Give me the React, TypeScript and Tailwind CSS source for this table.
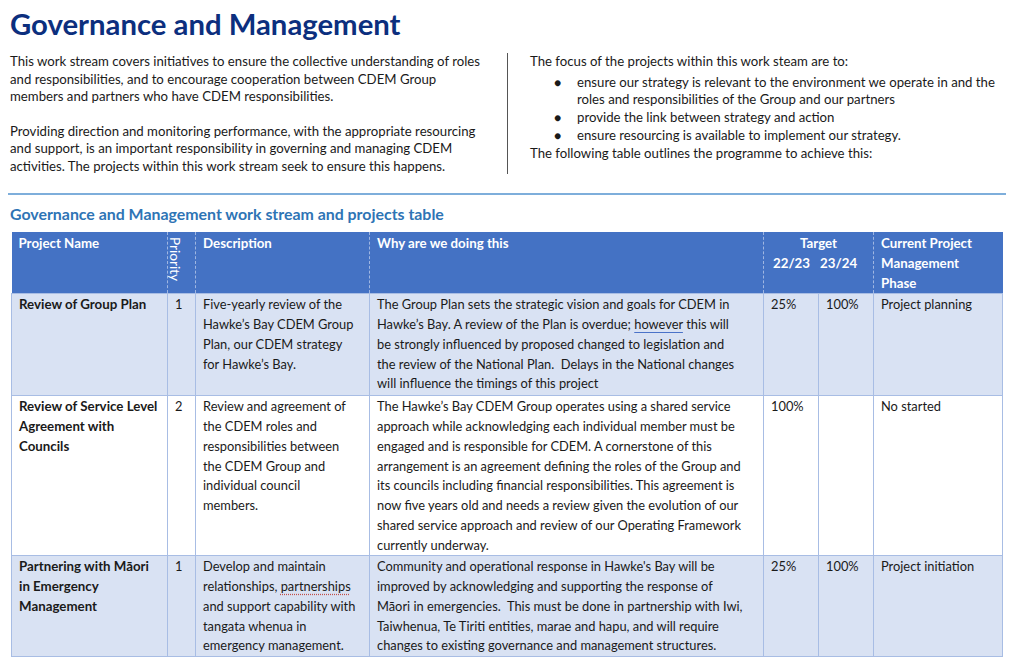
import React from "react";

const Lines = ({ lines, bold = false }: { lines: React.ReactNode[]; bold?: boolean }) => (
  <div className={bold ? "font-bold" : ""}>
    {lines.map((l, i) => (
      <div key={i} className="whitespace-pre">
        {l}
      </div>
    ))}
  </div>
);

type Row = {
  name: string[];
  priority: string;
  desc: React.ReactNode[];
  why: React.ReactNode[];
  t1: string;
  t2: string;
  phase: string;
  shaded: boolean;
  h: string;
};

const rows: Row[] = [
  {
    name: ["Review of Group Plan"],
    priority: "1",
    desc: ["Five-yearly review of the", "Hawke’s Bay CDEM Group", "Plan, our CDEM strategy", "for Hawke’s Bay."],
    why: [
      "The Group Plan sets the strategic vision and goals for CDEM in",
      <>
        Hawke’s Bay. A review of the Plan is overdue;{" "}
        <span className="underline decoration-[#4a72c8] underline-offset-[3px]">however</span> this will
      </>,
      "be strongly influenced by proposed changed to legislation and",
      "the review of the National Plan.  Delays in the National changes",
      "will influence the timings of this project",
    ],
    t1: "25%",
    t2: "100%",
    phase: "Project planning",
    shaded: true,
    h: "h-[102px]",
  },
  {
    name: ["Review of Service Level", "Agreement with", "Councils"],
    priority: "2",
    desc: [
      "Review and agreement of",
      "the CDEM roles and",
      "responsibilities between",
      "the CDEM Group and",
      "individual council",
      "members.",
    ],
    why: [
      "The Hawke’s Bay CDEM Group operates using a shared service",
      "approach while acknowledging each individual member must be",
      "engaged and is responsible for CDEM. A cornerstone of this",
      "arrangement is an agreement defining the roles of the Group and",
      "its councils including financial responsibilities. This agreement is",
      "now five years old and needs a review given the evolution of our",
      "shared service approach and review of our Operating Framework",
      "currently underway.",
    ],
    t1: "100%",
    t2: "",
    phase: "No started",
    shaded: false,
    h: "h-[160px]",
  },
  {
    name: ["Partnering with Māori", "in Emergency", "Management"],
    priority: "1",
    desc: [
      "Develop and maintain",
      <>
        relationships,{" "}
        <span className="underline decoration-dotted decoration-[#c0504d] underline-offset-[3px]">partnerships</span>
      </>,
      "and support capability with",
      "tangata whenua in",
      "emergency management.",
    ],
    why: [
      "Community and operational response in Hawke's Bay will be",
      "improved by acknowledging and supporting the response of",
      "Māori in emergencies.  This must be done in partnership with Iwi,",
      "Taiwhenua, Te Tiriti entities, marae and hapu, and will require",
      "changes to existing governance and management structures.",
    ],
    t1: "25%",
    t2: "100%",
    phase: "Project initiation",
    shaded: true,
    h: "h-[100px]",
  },
];

export default function App() {
  const td = "align-top pl-[7px] pr-[2px] pt-[1px] border border-[#a8bde4]";
  const th = "align-top pl-[7px] pt-[2px] border-r border-dashed border-[#9fb6e2] text-left font-bold text-[13.3px]";
  return (
    <div className="w-[1009px] h-[665px] overflow-hidden bg-white font-['Lato',sans-serif] text-[#1a1a1a]">
      <h1 className="pl-[10px] pt-[6px] text-[29.3px] leading-[36px] font-bold text-[#0c2f7e]">
        Governance and Management
      </h1>

      <div className="flex mt-[11px] text-[13.2px] leading-[17.5px]">
        <div className="w-[507px] pl-[10px]">
          <p className="whitespace-pre">
            {"This work stream covers initiatives to ensure the collective understanding of roles\nand responsibilities, and to encourage cooperation between CDEM Group\nmembers and partners who have CDEM responsibilities."}
          </p>
          <p className="whitespace-pre mt-[17px]">
            {"Providing direction and monitoring performance, with the appropriate resourcing\nand support, is an important responsibility in governing and managing CDEM\nactivities. The projects within this work stream seek to ensure this happens."}
          </p>
        </div>
        <div className="w-px h-[121px] bg-[#555]" />
        <div className="pl-[22px]">
          <p>The focus of the projects within this work steam are to:</p>
          <ul className="mt-[3px] leading-[17.7px]">
            {[
              ["ensure our strategy is relevant to the environment we operate in and the", "roles and responsibilities of the Group and our partners"],
              ["provide the link between strategy and action"],
              ["ensure resourcing is available to implement our strategy."],
            ].map((b, i) => (
              <li key={i} className="flex">
                <span className="w-[47px] pl-[24px] text-[12px]">●</span>
                <span className="whitespace-pre">{b.join("\n")}</span>
              </li>
            ))}
          </ul>
          <p className="mt-[1px]">The following table outlines the programme to achieve this:</p>
        </div>
      </div>

      <div className="mt-[18px] ml-[8px] w-[998px] h-[2px] bg-[#7eaedb]" />

      <h2 className="mt-[9px] pl-[10px] text-[15.9px] leading-[20px] font-bold text-[#2e74b5]">
        Governance and Management work stream and projects table
      </h2>

      <table className="mt-[8px] ml-[11px] w-[991px] table-fixed border-collapse text-[12.85px] leading-[19.75px]">
        <colgroup>
          <col className="w-[156px]" />
          <col className="w-[28px]" />
          <col className="w-[174px]" />
          <col className="w-[394px]" />
          <col className="w-[55px]" />
          <col className="w-[55px]" />
          <col className="w-[129px]" />
        </colgroup>
        <thead>
          <tr className="h-[61px] bg-[#4472c4] text-white">
            <th className={th}>Project Name</th>
            <th className="align-top pt-[5px] border-r border-dashed border-[#9fb6e2] font-normal">
              <div className="mx-auto [writing-mode:vertical-rl] leading-[14px] text-[13.6px]">Priority</div>
            </th>
            <th className={th}>Description</th>
            <th className={th}>Why are we doing this</th>
            <th colSpan={2} className="align-top pt-[2px] border-r border-dashed border-[#9fb6e2] font-bold text-[13.3px]">
              <div className="text-center">Target</div>
              <div className="flex pl-[9px]">
                <span>22/23</span>
                <span className="ml-[10px]">23/24</span>
              </div>
            </th>
            <th className="align-top pl-[7px] pt-[2px] text-left font-bold text-[13.3px]">
              <Lines lines={["Current Project", "Management", "Phase"]} />
            </th>
          </tr>
        </thead>
        <tbody>
          {rows.map((r, i) => (
            <tr key={i} className={`${r.h} ${r.shaded ? "bg-[#d9e2f3]" : "bg-white"}`}>
              <td className={`${td} font-bold text-[13.3px]`}>
                <Lines lines={r.name} />
              </td>
              <td className={td}>{r.priority}</td>
              <td className={td}>
                <Lines lines={r.desc} />
              </td>
              <td className={td}>
                <Lines lines={r.why} />
              </td>
              <td className={td}>{r.t1}</td>
              <td className={td}>{r.t2}</td>
              <td className={td}>{r.phase}</td>
            </tr>
          ))}
        </tbody>
      </table>
    </div>
  );
}
